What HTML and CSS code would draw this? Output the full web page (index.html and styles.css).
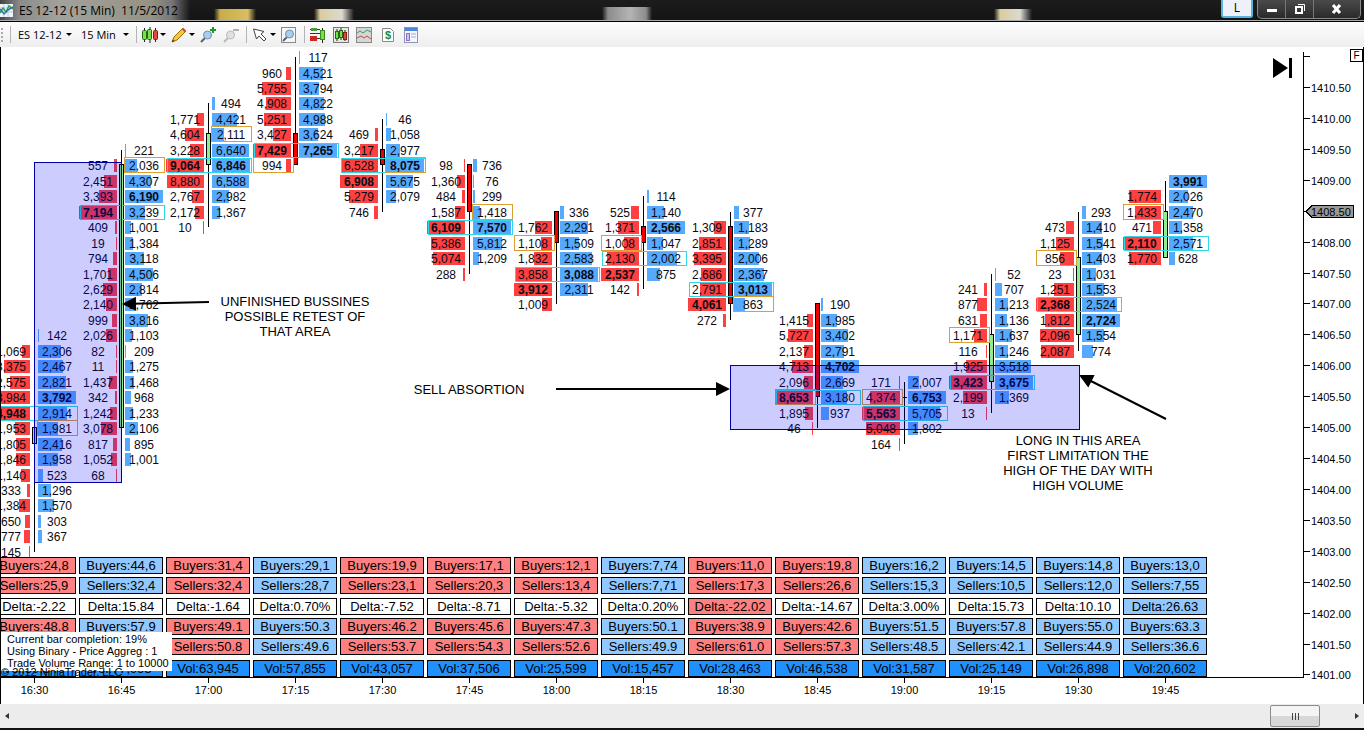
FILE: index.html
```html
<!DOCTYPE html>
<html lang="en">
  <head>
    <meta charset="utf-8" />
    <title>ES 12-12 (15 Min) 11/5/2012</title>
    <link rel="stylesheet" href="styles.css">
  </head>

  <body>

    <!-- Title bar -->
    <header class="titlebar">
      <svg class="app-icon" width="13" height="13" viewBox="0 0 13 13">
        <rect width="13" height="13" fill="#eef4fa" />
        <path d="M0 4h13M0 8h13M4 0v13M8 0v13" stroke="#b9cfe4" />
        <path d="M0 9l3-5 3 4 3-6 4 3" fill="none" stroke="#3a9a4a" stroke-width="1.5" />
        <path d="M0 5l4 5 4-4 5-3" fill="none" stroke="#2f6fb4" stroke-width="1.5" />
      </svg>
      <h1>ES 12-12 (15 Min)&nbsp; 11/5/2012</h1>
      <button class="link-btn">L</button>
      <div class="caption-btns">
        <button class="cap-min" aria-label="Minimize">
          <svg width="12" height="10"><rect x="1" y="5" width="10" height="3" fill="#fff" /></svg>
        </button>
        <button class="cap-max" aria-label="Restore">
          <svg width="12" height="12" fill="none" stroke="#fff"><path d="M4 1.5h6.500V8" /><rect x="2" y="4" width="6" height="6" stroke-width="2" /></svg>
        </button>
        <button class="cap-close" aria-label="Close">
          <svg width="12" height="10"><path d="M2 1l7 8M9 1l-7 8" stroke="#fff" stroke-width="3" /></svg>
        </button>
      </div>
    </header>

    <!-- Toolbar -->
    <nav class="toolbar">
      <span class="grip"></span>
      <span class="sep"></span>
      <label class="picker picker-symbol"><select aria-label="Instrument"><option>ES 12-12</option></select></label>
      <label class="picker picker-period"><select aria-label="Period"><option>15 Min</option></select></label>
      <span class="sep"></span>
      <button class="tool drop" aria-label="Chart style">
        <svg width="16" height="16">
          <path d="M2.5 1v14M8 0v16M13.5 1v14" stroke="#222" />
          <rect x="0.5" y="3.5" width="4" height="9" rx="1" fill="#7be04a" stroke="#1f6a12" />
          <rect x="5.5" y="2.5" width="4" height="10" rx="1" fill="#7be04a" stroke="#1f6a12" />
          <rect x="11.5" y="3.5" width="4" height="9" rx="1" fill="#e2483c" stroke="#8a1a12" />
        </svg>
      </button>
      <button class="tool drop" aria-label="Drawing tools">
        <svg width="16" height="16">
          <path d="M1 15l2-5 8.5-8.5 3 3L6 13z" fill="#f6c92c" stroke="#9a6a10" />
          <path d="M11.5 1.5l3 3" stroke="#c8473a" stroke-width="2" />
          <path d="M1 15l1-2.5 1.5 1.5z" fill="#333" />
        </svg>
      </button>
      <button class="tool" aria-label="Zoom in">
        <svg width="16" height="16">
          <path d="M1 15l4-4" stroke="#56616e" stroke-width="2" />
          <circle cx="7.5" cy="8" r="4" fill="#a8cdee" stroke="#6f8fae" />
          <path d="M13 0v6M10 3h6" stroke="#1a9a2a" stroke-width="2" />
        </svg>
      </button>
      <button class="tool" aria-label="Zoom out">
        <svg width="16" height="16">
          <path d="M1 15l4-4" stroke="#b8b8b8" stroke-width="2" />
          <circle cx="7.5" cy="8" r="4" fill="#e0e0e0" stroke="#bcbcbc" />
          <path d="M10 3h6" stroke="#b0b0b0" stroke-width="2" />
        </svg>
      </button>
      <span class="sep"></span>
      <button class="tool drop" aria-label="Cursor">
        <svg width="16" height="16">
          <path d="M1.5 2l3 10 2.5-3 5 5 2-2-5-5 3-2.500z" fill="#fff" stroke="#444" />
        </svg>
      </button>
      <button class="tool" aria-label="Zoom frame">
        <svg width="16" height="16">
          <rect x="0.5" y="0.5" width="14" height="15" fill="#f6f6f6" stroke="#8a8a8a" />
          <path d="M2 14l4-4" stroke="#56616e" stroke-width="2" />
          <circle cx="8.5" cy="7" r="4" fill="#a8cdee" stroke="#6f8fae" />
        </svg>
      </button>
      <span class="sep"></span>
      <button class="tool" aria-label="Chart trader">
        <svg width="16" height="16">
          <path d="M0 2.5h10M0 6.5h11M0 11.5h12" stroke="#333" />
          <rect x="1" y="1" width="6" height="3" fill="#4b9a3c" />
          <rect x="0" y="9" width="7" height="5" fill="#cc2a20" />
          <path d="M12.5 1v15" stroke="#222" />
          <rect x="10.5" y="3.5" width="4" height="9" fill="#7be04a" stroke="#3a8a22" />
        </svg>
      </button>
      <button class="tool" aria-label="Data series">
        <svg width="16" height="16">
          <rect x="0.5" y="0.5" width="15" height="15" fill="#e8e8e8" stroke="#777" />
          <path d="M4 2v12M8 1v12M12 3v11" stroke="#222" />
          <rect x="2.5" y="4.5" width="3" height="7" fill="#7be04a" stroke="#1f6a12" />
          <rect x="6.5" y="3.5" width="3" height="7" fill="#7be04a" stroke="#1f6a12" />
          <rect x="10.5" y="5.5" width="3" height="7" fill="#e2483c" stroke="#8a1a12" />
        </svg>
      </button>
      <button class="tool" aria-label="Indicators">
        <svg width="16" height="16">
          <rect x="0.5" y="0.5" width="15" height="15" fill="#d6d6d6" stroke="#8a8a8a" />
          <path d="M1 6l3-2 3 2 4-3 4 2" fill="none" stroke="#3a9a5a" />
          <path d="M1 11l4-2 3 2 3-2 4 3" fill="none" stroke="#d0443c" />
        </svg>
      </button>
      <button class="tool" aria-label="Strategies">
        <svg width="16" height="16">
          <path d="M3.5 1.5h8l3 3v10h-11z" fill="#fff" stroke="#8a8a8a" />
          <text x="6" y="12" class="dollar">$</text>
        </svg>
      </button>
      <button class="tool" aria-label="Properties">
        <svg width="16" height="16">
          <rect x="2.5" y="0.5" width="13" height="15" fill="#f4f6ff" stroke="#8a94b8" />
          <rect x="3" y="1" width="12" height="3" fill="#4a86dc" />
          <rect x="4.5" y="6.5" width="3" height="7" fill="#cfc0f0" stroke="#8a70c8" />
          <path d="M9 7h5M9 10h5" stroke="#9ab0d8" />
        </svg>
      </button>
    </nav>

    <!-- Chart -->
    <main class="chart">
      <div class="plot">
        <svg id="footprint" class="footprint"></svg>
        <table class="stats"><tbody id="stats"></tbody></table>
        <div class="times" id="times"></div>

        <button class="go-last" aria-label="Go to last bar">
          <svg width="22" height="20"><path d="M1 0l15 10L1 20z" /><rect x="17" y="0" width="3" height="20" /></svg>
        </button>
        <div class="info">
          <p>Current bar completion: 19%</p>
          <p>Using Binary - Price Aggreg : 1</p>
          <p>Trade Volume Range: 1 to 10000</p>
        </div>
        <p class="copyright">© 2012 NinjaTrader, LLC</p>
      </div>
      <div class="price-axis">
        <svg id="prices" class="prices"></svg>
        <button class="fixed-btn">F</button>
      </div>
    </main>

    <!-- Scrollbar -->
    <footer class="scrollbar">
      <button class="scroll-left" aria-label="Scroll left"></button>
      <div class="track"><div class="thumb"><i></i><i></i><i></i></div></div>
      <button class="scroll-right" aria-label="Scroll right"></button>
    </footer>

    <script src="chart.js"></script>
  </body>
</html>
```
FILE: styles.css
```css
* {
  box-sizing: border-box;
}

body {
  margin: 0;
  min-height: 100vh;
  display: flex;
  flex-direction: column;
  background: #222;
  color: #000;
  font-family: "Liberation Sans", Arial, sans-serif;
}

button,
select {
  margin: 0;
  padding: 0;
  border: 0;
  background: none;
  color: inherit;
  font: inherit;
}

h1,
p {
  margin: 0;
}

svg {
  display: block;
}

/* ---- title bar ---- */

.titlebar {
  display: flex;
  align-items: flex-start;
  height: 22px;
  padding-right: 3px;
  overflow: hidden;
  border-bottom: 1px solid #000;
  box-shadow: inset 0 -1px #aaa;
  background:
    linear-gradient(90deg, #444 0, #8c8c8c 20px, #a2a29c 60px, #969284 150px, #777 172px, transparent 190px),
    linear-gradient(90deg, transparent 214px, #c9ac4a 220px, #d8be62 248px, transparent 256px) 0 9px no-repeat,
    linear-gradient(90deg, transparent 314px, #d8cd9c 320px, #dcdad0 342px, transparent 354px) 0 9px no-repeat,
    linear-gradient(90deg, transparent 602px, #8c8c8c 608px, #b4b4b4 630px, #8c8c8c 646px, transparent 652px) 0 7px no-repeat,
    linear-gradient(90deg, transparent 994px, #d8cd9c 1000px, #dcdad0 1020px, transparent 1032px) 0 9px no-repeat,
    linear-gradient(#1c1c1c, #141414);
}

.app-icon {
  margin-top: 4px;
}

.titlebar h1 {
  flex: 1;
  margin-left: 6px;
  font: 12px/22px "Open Sans", "Noto Sans", sans-serif;
}

.link-btn {
  width: 32px;
  height: 18px;
  margin-right: 4px;
  border: 2px solid #58b4dc;
  border-top: 0;
  border-radius: 0 0 3px 3px;
  background: #eef2f8;
  font: 12px/16px "Open Sans", sans-serif;
}

.caption-btns {
  display: flex;
  height: 19px;
  border: 1px solid #8a8a8a;
  border-top: 0;
  border-radius: 0 0 5px 5px;
  background: linear-gradient(#4a4a4a, #2a2a2a);
}

.caption-btns button {
  display: flex;
  align-items: center;
  justify-content: center;
  width: 28px;
  border-right: 1px solid #777;
}

.caption-btns .cap-close {
  width: 46px;
  border-right: 0;
}

/* ---- toolbar ---- */

.toolbar {
  display: flex;
  align-items: center;
  height: 25px;
  background: linear-gradient(#fdfdfd, #eeeeee);
  font: 11px/16px "Open Sans", "Noto Sans", sans-serif;
}

.grip {
  width: 2px;
  height: 14px;
  margin: 0 7px 0 1px;
  background: repeating-linear-gradient(#aaa 0 2px, transparent 2px 4px);
}

.sep {
  width: 1px;
  height: 17px;
  margin-right: 5px;
  background: #b4b4b4;
}

.picker {
  display: flex;
  align-items: center;
  justify-content: space-between;
  margin-right: 7px;
  padding-left: 2px;
}

.picker-symbol {
  width: 56px;
}

.picker-period {
  width: 50px;
}

.picker select {
  appearance: none;
}

.picker::after,
.drop::after {
  content: "";
  border: 3px solid transparent;
  border-top-color: #000;
  border-bottom: 0;
}

.tool {
  display: flex;
  align-items: center;
  gap: 2px;
  margin-right: 7px;
}

.drop {
  margin-right: 5px;
}

.dollar {
  fill: #1f8a2a;
  font: bold 11px "Liberation Sans", sans-serif;
}

/* ---- chart ---- */

.chart {
  flex: 1;
  display: flex;
  border: 1px solid #000;
  border-width: 0 1px;
  background: #fff;
}

.plot {
  position: relative;
  flex: 1;
  min-width: 0;
  overflow: hidden;
}

.footprint {
  width: 100%;
  height: 510px;
  font-size: 13px;
}

.footprint text {
  text-anchor: middle;
}

.footprint .cell {
  font-size: 12px;
  fill: #0a0a14;
}

.footprint .max {
  font-weight: bold;
}

.footprint rect {
  shape-rendering: crispEdges;
}

.bid {
  fill: #ff4040;
}

.ask {
  fill: #55aaff;
}

.up {
  fill: #90ee90;
  stroke: #000;
}

.down {
  fill: #ee0000;
  stroke: #000;
}

.poc {
  fill: none;
  stroke: #2fd8e4;
}

.edge {
  fill: none;
  stroke: #dca030;
}

.zone {
  fill: #0000ff;
  fill-opacity: 0.2;
  stroke: #0000aa;
}

.arrow {
  stroke: #000;
  stroke-width: 2;
}

.stats {
  width: 1221px;
  margin-left: -12px;
  table-layout: fixed;
  border-spacing: 3px 0;
  font-size: 13px;
  line-height: 15px;
  text-align: center;
  white-space: nowrap;
}

.stats td {
  height: 20px;
  padding: 0;
  vertical-align: top;
}

.stats .delta-above td {
  height: 21px;
}

.stats .vol-above td {
  height: 22px;
}

.stats .vol td {
  height: 17px;
}

.stats span {
  display: block;
  border: 1px solid #000;
}

.stats .sell {
  background: #ff8080;
}

.stats .buy {
  background: #90c8ff;
}

.stats .total {
  background: #1e90ff;
}

.times {
  display: flex;
  height: 27px;
  border-top: 1px solid #000;
  font-size: 11px;
  line-height: 14px;
}

.times time {
  flex: 0 0 87px;
  text-align: center;
}

.times time:first-child {
  margin-left: -10px;
}

.times time::before {
  content: "";
  display: block;
  width: 1px;
  height: 5px;
  margin: 0 auto;
  background: #000;
}

.go-last {
  position: absolute;
  top: 11px;
  right: 9px;
}

.info {
  position: absolute;
  left: 0;
  top: 585px;
  width: 171px;
  padding: 1px 0 2px 6px;
  background: #fff;
  font-size: 11px;
  line-height: 12px;
  white-space: nowrap;
}

.copyright {
  position: absolute;
  left: 0;
  top: 618px;
  font-size: 11px;
  line-height: 14px;
}

.price-axis {
  position: relative;
  width: 60px;
}

.prices {
  width: 100%;
  height: 657px;
  font-size: 11px;
}

.prices path {
  fill: none;
  stroke: #000;
  shape-rendering: crispEdges;
}

.prices .marker {
  fill: #999;
}

.fixed-btn {
  position: absolute;
  top: 2px;
  right: 0;
  width: 13px;
  height: 13px;
  border: 1px solid #000;
  font-size: 10px;
  line-height: 11px;
}

/* ---- scrollbar ---- */

.scrollbar {
  display: flex;
  align-items: center;
  height: 26px;
  padding: 0 5px;
  border-bottom: 2px solid #111;
  background: #ececec;
}

.track {
  flex: 1;
  display: flex;
  justify-content: flex-end;
  padding-right: 35px;
}

.thumb {
  display: flex;
  align-items: center;
  justify-content: center;
  gap: 2px;
  width: 50px;
  height: 22px;
  border: 1px solid #8c8c8c;
  border-radius: 2px;
  background: linear-gradient(#f4f4f4 50%, #d8d8d8 50%);
}

.thumb i {
  width: 1px;
  height: 7px;
  background: #444;
}

.scroll-left,
.scroll-right {
  border: 3px solid transparent;
}

.scroll-left {
  border-right: 4px solid #333;
  border-left: 0;
}

.scroll-right {
  border-left: 4px solid #333;
  border-right: 0;
}
```
FILE: chart.js
```js
// bids / asks: [top price, volume at each tick going down]
// body: [high end, low end, direction], wick: [high, low]
const TICK = 0.25;
const bars = [
  { time: "16:30", wick: [1406.5, 1403], body: [1405, 1404.75, "up"], poc: 1405.25, edge: ["ask", 1405],
    bids: [1406.25, 1069, 3375, 2575, 3984, 4948, 1953, 1805, 1846, 1140, 333, 1384, 650, 777, 145],
    asks: [1406.5, 142, 2306, 2467, 2821, 3792, 2914, 1981, 2416, 1958, 523, 1296, 1570, 303, 367] },
  { time: "16:45", wick: [1409.5, 1404.5], body: [1409.25, 1405, "up"], poc: 1408.5, edge: ["ask", 1409.25],
    bids: [1409.25, 557, 2451, 3393, 7194, 409, 19, 794, 1701, 2629, 2140, 999, 2026, 82, 11, 1437, 342, 1242, 3078, 817, 1052, 68],
    asks: [1409.5, 221, 2036, 4307, 6190, 3239, 1001, 1384, 3118, 4506, 2814, 1762, 3816, 1103, 209, 1275, 1468, 968, 1233, 2106, 895, 1001] },
  { time: "17:00", wick: [1410.25, 1408.25], body: [1409.75, 1409.25, "up"], poc: 1409.25, edge: ["ask", 1409.75],
    bids: [1410, 1771, 4604, 3228, 9064, 8880, 2767, 2172, 10],
    asks: [1410.25, 494, 4421, 2111, 6640, 6846, 6588, 2982, 1367] },
  { time: "17:15", wick: [1411, 1409.25], body: [1409.75, 1409.25, "down"], poc: 1409.5, edge: ["bid", 1409.25],
    bids: [1410.75, 960, 5755, 4908, 5251, 3427, 7429, 994],
    asks: [1411, 117, 4521, 3794, 4822, 4988, 3624, 7265] },
  { time: "17:30", wick: [1410, 1408.5], body: [1409.5, 1409.25, "down"], poc: 1409.25, edge: ["ask", 1409.25],
    bids: [1409.75, 469, 3217, 6528, 6908, 5279, 746],
    asks: [1410, 46, 1058, 2977, 8075, 5675, 2079] },
  { time: "17:45", wick: [1409.25, 1407.5], body: [1409.25, 1408.5, "down"], poc: 1408.25, edge: ["ask", 1408.5],
    bids: [1409.25, 98, 1360, 484, 1587, 6109, 5386, 5074, 288],
    asks: [1409.25, 736, 76, 299, 1418, 7570, 5812, 1209] },
  { time: "18:00", wick: [1408.5, 1407], body: [1408.5, 1408, "down"], poc: 1407.5, edge: ["bid", 1408],
    bids: [1408.25, 1762, 1108, 1832, 3858, 3912, 1009],
    asks: [1408.5, 336, 2291, 1509, 2583, 3088, 2311] },
  { time: "18:15", wick: [1408.75, 1407.25], body: [1408.25, 1408, "down"], poc: 1407.75, edge: ["bid", 1408],
    bids: [1408.5, 525, 1371, 1008, 2130, 2537, 142],
    asks: [1408.75, 114, 1140, 2566, 1047, 2002, 875] },
  { time: "18:30", wick: [1408.5, 1406.75], body: [1408.25, 1407, "down"], poc: 1407.25, edge: ["ask", 1407],
    bids: [1408.25, 1309, 2851, 3395, 2686, 2791, 4061, 272],
    asks: [1408.5, 377, 1183, 1289, 2006, 2367, 3013, 863] },
  { time: "18:45", wick: [1407, 1405], body: [1407, 1405.5, "down"], poc: 1405.5, edge: ["bid", 1405.5],
    bids: [1406.75, 1415, 5727, 2137, 4713, 2096, 8653, 1895, 46],
    asks: [1407, 190, 1985, 3402, 2791, 4702, 2669, 3180, 937] },
  { time: "19:00", wick: [1405.75, 1404.75], body: [1405.5, 1405.5, "down"], poc: 1405.25, edge: ["bid", 1405.5],
    bids: [1405.75, 171, 4374, 5563, 5048, 164],
    asks: [1405.75, 2007, 6753, 5705, 1802] },
  { time: "19:15", wick: [1407.5, 1405.25], body: [1406.5, 1405.75, "up"], poc: 1405.75, edge: ["bid", 1406.5],
    bids: [1407.25, 241, 877, 631, 1171, 116, 1925, 3423, 2199, 13],
    asks: [1407.5, 52, 707, 1213, 1136, 1637, 1246, 3518, 3675, 1369] },
  { time: "19:30", wick: [1408.5, 1406.25], body: [1407.75, 1406.5, "up"], poc: 1407, edge: ["bid", 1407.75],
    bids: [1408.25, 473, 1125, 856, 23, 1251, 2368, 1812, 2096, 2087],
    asks: [1408.5, 293, 1410, 1541, 1403, 1031, 1553, 2524, 2724, 1554, 774] },
  { time: "19:45", wick: [1409, 1407.75], body: [1408.5, 1407.75, "up"], poc: 1408, edge: ["bid", 1408.5],
    bids: [1408.75, 1774, 1433, 471, 2110, 1770],
    asks: [1409, 3991, 2026, 2470, 1358, 2571, 628] },
];

const footprint = document.getElementById("footprint");
const prices = document.getElementById("prices");

const barX = (i) => 33 + i * 87;
const priceY = (p) => Math.round(41 + (1410.5 - p) * 61.84);

function add(parent, tag, attrs, text) {
  const el = document.createElementNS("http://www.w3.org/2000/svg", tag);
  for (const key in attrs) el.setAttribute(key, attrs[key]);
  if (text !== undefined) el.textContent = text;
  parent.appendChild(el);
}

function rect(cls, x, y, width, height) {
  add(footprint, "rect", { class: cls, x, y, width, height });
}

function drawSide(side, x, [top, ...volumes]) {
  const max = Math.max(...volumes);
  volumes.forEach((v, i) => {
    const y = priceY(top - i * TICK);
    const w = Math.max(1, Math.round((v / max) * 38));
    rect(side, side === "bid" ? x - 4 - w : x + 4, y - 6, w, 13);
    add(footprint, "text", {
      class: v === max ? "cell max" : "cell",
      x: side === "bid" ? x - 23 : x + 23,
      y: y + 5,
    }, v.toLocaleString("en-US"));
  });
}

bars.forEach((bar, i) => {
  const x = barX(i);
  drawSide("bid", x, bar.bids);
  drawSide("ask", x, bar.asks);

  // candle
  const [top, bottom, dir] = bar.body;
  const y1 = priceY(bar.wick[0]);
  rect("candle", x, y1, 1, priceY(bar.wick[1]) - y1);
  if (top === bottom) rect("candle", x - 2, priceY(top), 5, 1);
  else rect(dir, x - 1.5, priceY(top) - 0.5, 4, priceY(bottom) - priceY(top));

  rect("poc", x - 40.5, priceY(bar.poc) - 6.5, 84, 14);
  rect("edge", bar.edge[0] === "bid" ? x - 41.5 : x + 3.5, priceY(bar.edge[1]) - 7.5, 40, 15);
});

// ---- drawing objects ----
rect("zone", 33.5, 115.5, 87, 320);
rect("zone", 729.5, 318.5, 349, 64);

function arrow(x1, y1, x2, y2) {
  const a = Math.atan2(y2 - y1, x2 - x1) * 180 / Math.PI;
  const len = Math.hypot(x2 - x1, y2 - y1);
  const g = `translate(${x2} ${y2}) rotate(${a})`;
  add(footprint, "line", { class: "arrow", transform: g, x1: -len, y1: 0, x2: -10, y2: 0 });
  add(footprint, "path", { transform: g, d: "M0 0l-14 -7v14z" });
}

arrow(208, 255, 121, 257);
arrow(555, 342, 729, 342);
arrow(1165, 372, 1078, 328);

function note(x, y, lines) {
  lines.forEach((line, i) => add(footprint, "text", { x, y: y + i * 15 }, line));
}

note(294, 259, ["UNFINISHED BUSSINES", "POSSIBLE RETEST OF", "THAT AREA"]);
note(468, 347, ["SELL ABSORTION"]);
note(1077, 398, ["LONG IN THIS AREA", "FIRST LIMITATION THE", "HIGH OF THE DAY WITH", "HIGH VOLUME"]);

// ---- statistics under the bars ----
const totals = bars.map((bar) => {
  const sum = (side) => side.slice(1).reduce((a, b) => a + b, 0);
  const buy = sum(bar.asks);
  const sell = sum(bar.bids);
  return { buy, sell, vol: buy + sell, side: buy > sell ? "buy" : "sell" };
});

const short = (n) => n.toLocaleString("en-US").slice(0, 4);
const share = (n, t) => (n / t.vol * 100).toFixed(2).slice(0, 4);

function deltaText(t) {
  const d = ((t.buy - t.sell) / t.vol * 100).toFixed(2);
  return "Delta:" + (d.length < 5 ? d + "%" : d);
}

const rows = [
  ["", (t) => "Buyers:" + short(t.buy)],
  ["delta-above", (t) => "Sellers:" + short(t.sell)],
  ["", deltaText, (t) => Math.abs(t.buy - t.sell) / t.vol > 0.2 ? t.side : "flat"],
  ["", (t) => "Buyers:" + share(t.buy, t)],
  ["vol-above", (t) => "Sellers:" + share(t.sell, t)],
  ["vol", (t) => "Vol:" + t.vol.toLocaleString("en-US"), () => "total"],
];

document.getElementById("stats").innerHTML = rows.map(([cls, text, color]) =>
  `<tr class="${cls}">` + totals.map((t) =>
    `<td><span class="${color ? color(t) : t.side}">${text(t)}</span></td>`).join("") + "</tr>"
).join("");

document.getElementById("times").innerHTML =
  bars.map((bar) => `<time>${bar.time}</time>`).join("");

// ---- price axis ----
add(prices, "path", { d: "M0.5 5V631" });
add(prices, "path", { d: `M0 ${priceY(1411) - 0.5}h7` });
for (let p = 1410.5; p >= 1401; p -= 0.5) {
  const y = priceY(p);
  add(prices, "path", { d: `M0 ${y - 0.5}h7` });
  if (p === 1408.5) add(prices, "path", { class: "marker", d: `M3 ${y - 0.5}l6 -6h41v12h-41z` });
  add(prices, "text", { x: 8, y: y + 4 }, p.toFixed(2));
}
```
